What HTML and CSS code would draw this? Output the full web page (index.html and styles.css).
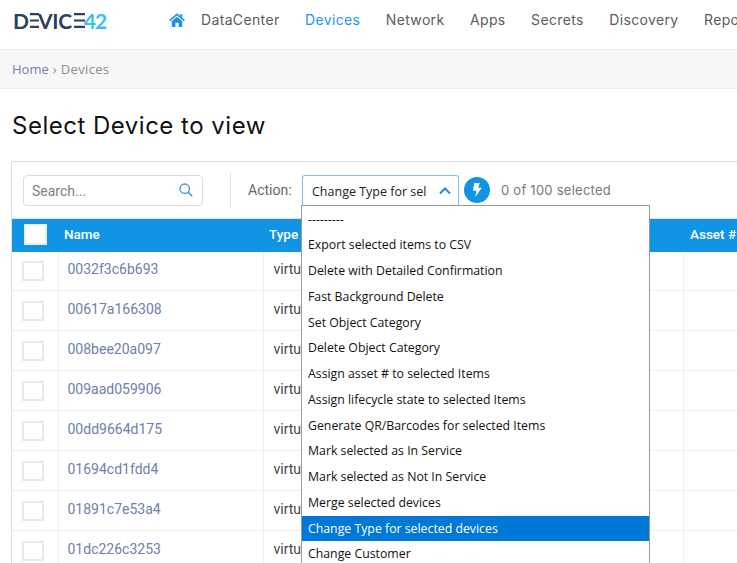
FILE: index.html
```html
<!DOCTYPE html>
<html lang="en">
<head>
<meta charset="utf-8">
<title>Select Device to view</title>
<link rel="stylesheet" href="styles.css">
</head>
<body>
<header class="topbar">
  <div class="logo">
    <span class="logo-dark">D</span>
    <svg class="logo-e" viewBox="0 0 10 16" preserveAspectRatio="none"><path d="M0 1.2H10M0 8H10M0 14.8H10"/></svg>
    <span class="logo-dark logo-vic">VIC</span>
    <svg class="logo-e logo-e-wide" viewBox="0 0 12 16" preserveAspectRatio="none"><path d="M0 1.2H12M0 8H12M0 14.8H12"/></svg>
    <span class="logo-light">42</span>
  </div>
  <nav class="nav">
    <svg class="home-icon" viewBox="0 0 16 14"><path class="home-body" d="M2.8 8 8 3.7 13.2 8v6H9.6V9.7H6.4V14H2.8z"/><path class="home-roof" d="M.6 7.6 8 1.4l7.4 6.2"/><path class="home-body" d="M11.2 1.2h2.2v3.6l-2.2-1.8z"/></svg>
    <a class="nav-item">DataCenter</a>
    <a class="nav-item active">Devices</a>
    <a class="nav-item">Network</a>
    <a class="nav-item">Apps</a>
    <a class="nav-item">Secrets</a>
    <a class="nav-item">Discovery</a>
    <a class="nav-item">Reports</a>
  </nav>
</header>
<div class="crumbs"><a class="crumb-link">Home</a> <span class="crumb-current">› Devices</span></div>
<h1 class="title">Select Device to view</h1>
<section class="card">
  <div class="toolbar">
    <div class="search">
      <span class="search-text">Search...</span>
      <svg class="search-icon" viewBox="0 0 14 14"><circle cx="5.7" cy="5.7" r="4.7"/><path d="M9.2 9.2 13.2 13.2"/></svg>
    </div>
    <div class="divider"></div>
    <span class="action-label">Action:</span>
    <div class="select">
      <span class="select-text">Change Type for sel</span>
      <svg class="chevron" viewBox="0 0 12 8"><path d="M1 6.5 6 1.5l5 5"/></svg>
      <ul class="dropdown">
        <li>---------</li>
        <li>Export selected items to CSV</li>
        <li>Delete with Detailed Confirmation</li>
        <li>Fast Background Delete</li>
        <li>Set Object Category</li>
        <li>Delete Object Category</li>
        <li>Assign asset # to selected Items</li>
        <li>Assign lifecycle state to selected Items</li>
        <li>Generate QR/Barcodes for selected Items</li>
        <li>Mark selected as In Service</li>
        <li>Mark selected as Not In Service</li>
        <li>Merge selected devices</li>
        <li class="selected">Change Type for selected devices</li>
        <li>Change Customer</li>
      </ul>
    </div>
    <button class="go"><svg class="bolt" viewBox="0 0 10 15"><path d="M2 0H8L6.2 5.2H10L3.2 15 4.4 8.2H.8z"/></svg></button>
    <span class="count">0 of 100 selected</span>
  </div>
  <table class="grid">
    <colgroup><col class="col-check"><col class="col-name"><col class="col-type"><col class="col-asset"></colgroup>
    <thead>
      <tr><th><span class="check head-check"></span></th><th class="th-name">Name</th><th class="th-type">Type</th><th class="th-asset">Asset #</th></tr>
    </thead>
    <tbody>
      <tr><td><span class="check"></span></td><td><a class="link">0032f3c6b693</a></td><td class="type">virtual</td><td></td></tr>
      <tr><td><span class="check"></span></td><td><a class="link">00617a166308</a></td><td class="type">virtual</td><td></td></tr>
      <tr><td><span class="check"></span></td><td><a class="link">008bee20a097</a></td><td class="type">virtual</td><td></td></tr>
      <tr><td><span class="check"></span></td><td><a class="link">009aad059906</a></td><td class="type">virtual</td><td></td></tr>
      <tr><td><span class="check"></span></td><td><a class="link">00dd9664d175</a></td><td class="type">virtual</td><td></td></tr>
      <tr><td><span class="check"></span></td><td><a class="link">01694cd1fdd4</a></td><td class="type">virtual</td><td></td></tr>
      <tr><td><span class="check"></span></td><td><a class="link">01891c7e53a4</a></td><td class="type">virtual</td><td></td></tr>
      <tr><td><span class="check"></span></td><td><a class="link">01dc226c3253</a></td><td class="type">virtual</td><td></td></tr>
    </tbody>
  </table>
</section>
</body>
</html>
```
FILE: styles.css
```css
* { box-sizing: border-box; }
html, body { margin: 0; height: 563px; overflow: hidden; background: #fff; }
body { font-family: Roboto, "Liberation Sans", sans-serif; font-size: 14px; color: #444; width: 737px; }

.topbar { height: 50px; display: flex; align-items: center; border-bottom: 1px solid #ededed; padding-left: 13px; white-space: nowrap; overflow: hidden; }
.logo { width: 156px; flex: none; display: flex; align-items: center; font-family: Lato, sans-serif; font-weight: 700; font-size: 21px; line-height: 20px; margin-top: -8px; }
.logo-dark { color: #2c3f5b; }
.logo-vic { letter-spacing: -.3px; margin-left: -1px; }
.logo-light { color: #38c0f0; letter-spacing: -1px; margin-left: -1px; }
.logo-e { width: 9px; height: 15px; flex: none; margin-left: 1px; }
.logo-e-wide { width: 11px; margin-left: 2px; }
.logo-e path { fill: none; stroke: #2c3f5b; stroke-width: 2.2; }
.nav { display: flex; align-items: center; margin-top: -10px; font-family: Inter, sans-serif; font-size: 14px; letter-spacing: .35px; color: #5c5c5c; }
.home-icon { width: 16px; height: 14px; flex: none; margin-right: 16px; margin-top: 1px; }
.home-body { fill: #1a92e6; }
.home-roof { fill: none; stroke: #1a92e6; stroke-width: 1.6; }
.nav-item { margin-right: 25.5px; }
.nav-item.active { color: #2196f3; }

.crumbs { height: 39px; background: #f8f8f8; border-bottom: 1px solid #ededed; padding: 0 12px; display: flex; align-items: center; gap: 4px; font-family: "Open Sans", sans-serif; font-size: 13px; color: #8a8a8a; }
.crumb-link { color: #6c7fae; }
.crumb-current { letter-spacing: .35px; }

.title { margin: 24px 0 22px 12px; height: 26px; font-family: Inter, sans-serif; font-weight: 400; font-size: 24px; line-height: 26px; letter-spacing: .5px; color: #111; }

.card { margin-left: 11px; width: 760px; border: 1px solid #dedede; border-right: 0; border-bottom: 0; }
.toolbar { height: 56px; display: flex; align-items: center; padding-left: 11px; }
.search { width: 180px; height: 31px; flex: none; border: 1px solid #ddd; border-radius: 4px; display: flex; align-items: center; justify-content: space-between; padding: 0 9px 0 8px; color: #7f7f7f; }
.search-text { padding-top: 2px; }
.search-icon { width: 14px; height: 14px; fill: none; stroke: #3d96e0; stroke-width: 1.4; }
.divider { width: 1px; height: 35px; background: #ddd; margin: 0 17px 0 27px; }
.action-label { width: 54px; flex: none; color: #666; }
.select { position: relative; width: 157px; height: 31px; flex: none; border: 1px solid #7cc0ee; border-bottom: 0; border-radius: 3px 3px 0 0; display: flex; align-items: center; justify-content: space-between; padding: 0 7px 0 9px; font-family: "Open Sans", sans-serif; font-size: 12.5px; color: #222; }
.select-text { padding-top: 2px; }
.chevron { width: 12px; height: 8px; fill: none; stroke: #1a8fe0; stroke-width: 2; }
.dropdown { position: absolute; left: -2px; top: 29px; width: 349px; height: 400px; margin: 0; padding: 1px 0 0; list-style: none; background: #fff; border: 1px solid #999; z-index: 5; font-family: "Open Sans", sans-serif; font-size: 12.3px; color: #111; }
.dropdown li { height: 25.75px; line-height: 26.2px; padding-left: 6px; white-space: nowrap; }
.dropdown li.selected { background: #0078d7; color: #fff; }
.go { width: 26px; height: 26px; flex: none; margin-left: 5px; padding: 0; border: 0; border-radius: 50%; background: #1194e3; display: flex; align-items: center; justify-content: center; }
.bolt { width: 10px; height: 14px; fill: #fff; }
.count { margin-left: 11px; font-family: Inter, sans-serif; font-size: 13px; letter-spacing: .25px; color: #777; }

.grid { width: 760px; border-collapse: collapse; table-layout: fixed; }
.col-check { width: 46px; }
.col-name { width: 205px; }
.col-type { width: 420px; }
.grid th { height: 33px; padding: 0 0 2px; background: #1194e3; color: #fff; font-weight: 500; font-size: 13.5px; text-align: left; border-top: 1px solid #d6e6f2; }
.grid td { height: 40px; padding: 0 9px 4px; border-right: 1px solid #eee; border-bottom: 1px solid #eee; font-size: 14px; color: #444; white-space: nowrap; overflow: hidden; }
.grid tbody tr:first-child td { height: 39px; }
.grid td:first-child { padding: 0 0 0 10px; }
.grid td.type { padding-left: 10px; }
.th-name { padding-left: 6px !important; }
.th-type { padding-left: 6px !important; }
.th-asset { padding-left: 7px !important; }
.check { display: block; width: 22px; height: 20px; border: 2px solid #e9e9e9; background: #fff; }
.head-check { width: 23px; height: 21px; margin-left: 12px; border-color: #e6eef4; }
.link { color: #6c7fae; }
```
